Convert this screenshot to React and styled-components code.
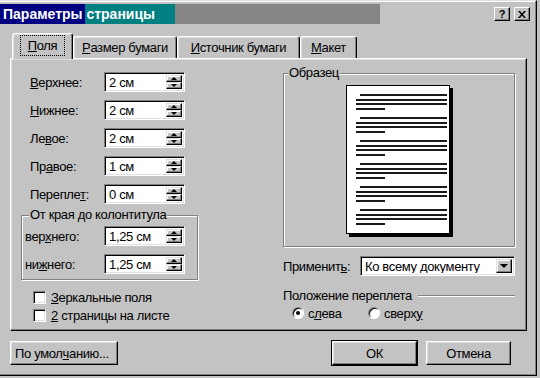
import React from 'react';
import styled, { createGlobalStyle } from 'styled-components';

const GlobalStyle = createGlobalStyle`
  body {
    margin: 0;
    background: #c3c3c3;
    font-family: "Liberation Sans", Arial, sans-serif;
    font-size: 13px;
    letter-spacing: -0.35px;
    color: #000;
  }
`;

const Window = styled.div`
  box-sizing: border-box;
  width: 537px;
  height: 376px;
  background: #c3c3c3;
  border-top: 1px solid #dfdfdf;
  border-right: 1px solid #000;
  border-bottom: 1px solid #000;
  box-shadow: inset -1px -1px 0 #808080, inset 0 1px 0 #fff;
  padding-top: 3px;
  display: flex;
  flex-direction: column;
`;

const TitleBar = styled.div`
  width: 534px;
  box-sizing: border-box;
  height: 20px;
  padding: 0 4px 0 3px;
  display: flex;
  align-items: center;
  background: linear-gradient(to right, #000080 0 85px, #008080 85px 175px, #868686 175px 380px, transparent 380px);
`;

const Title = styled.span`
  flex: 1;
  color: #fff;
  font-weight: bold;
  font-size: 14px;
  letter-spacing: 0;
`;

const CaptionButton = styled.div`
  box-sizing: border-box;
  width: 16px;
  height: 14px;
  margin-left: ${p => p.$gap || 0}px;
  background: #c3c3c3;
  border-top: 1px solid #fff;
  border-left: 1px solid #fff;
  border-right: 1px solid #000;
  border-bottom: 1px solid #000;
  box-shadow: inset -1px -1px 0 #808080;
  display: flex;
  align-items: center;
  justify-content: center;
  font-weight: bold;
  font-size: 11px;
  line-height: 11px;
`;

const Tabs = styled.div`
  display: flex;
  align-items: flex-end;
  height: 25px;
  margin: 9px 0 0 12px;
  position: relative;
  z-index: 1;
`;

const Tab = styled.div`
  box-sizing: border-box;
  width: ${p => p.$w}px;
  height: ${p => (p.$active ? 26 : 22)}px;
  margin-bottom: ${p => (p.$active ? -1 : 0)}px;
  background: #c3c3c3;
  border-top: 1px solid #fff;
  border-left: 1px solid #fff;
  border-right: 1px solid #000;
  border-radius: 3px 3px 0 0;
  box-shadow: inset -1px 0 0 #808080, inset 1px 1px 0 #dfdfdf;
  display: flex;
  align-items: center;
  justify-content: center;
  padding-bottom: ${p => (p.$active ? 2 : 0)}px;
`;

const Focus = styled.span`
  outline: 1px dotted #000;
  padding: 2px 7px;
`;

const Panel = styled.div`
  box-sizing: border-box;
  width: 517px;
  height: 273px;
  margin-left: 10px;
  border-top: 1px solid #fff;
  border-left: 1px solid #fff;
  border-right: 1px solid #000;
  border-bottom: 1px solid #000;
  box-shadow: inset -1px -1px 0 #808080, inset 1px 1px 0 #dfdfdf;
  padding: 7px 0 0 10px;
  display: grid;
  grid-template-columns: 262px 232px;
  align-items: start;
`;

const Column = styled.div`
  display: flex;
  flex-direction: column;
  padding-top: ${p => p.$top || 0}px;
`;

const FieldList = styled.div`
  display: flex;
  flex-direction: column;
  gap: 8px;
  padding-left: ${p => p.$indent || 0}px;
`;

const FieldRow = styled.div`
  display: flex;
  align-items: center;
  height: 20px;
`;

const Label = styled.span`
  width: ${p => p.$w}px;
  flex-shrink: 0;
  white-space: nowrap;
`;

const Sunken = styled.div`
  box-sizing: border-box;
  height: 20px;
  width: ${p => p.$w}px;
  background: #fff;
  border-top: 1px solid #808080;
  border-left: 1px solid #808080;
  border-right: 1px solid #fff;
  border-bottom: 1px solid #fff;
  box-shadow: inset 1px 1px 0 #000, inset -1px -1px 0 #dfdfdf;
  padding: 2px;
  display: flex;
  align-items: stretch;
`;

const Value = styled.span`
  flex: 1;
  min-width: 0;
  overflow: hidden;
  padding-left: 2px;
  line-height: 16px;
  white-space: nowrap;
`;

const SpinButtons = styled.div`
  width: 16px;
  flex: 0 0 16px;
  display: flex;
  flex-direction: column;
`;

const RaisedButton = styled.div`
  box-sizing: border-box;
  flex: 1;
  width: 16px;
  background: #c3c3c3;
  border-top: 1px solid #dfdfdf;
  border-left: 1px solid #dfdfdf;
  border-right: 1px solid #000;
  border-bottom: 1px solid #000;
  box-shadow: inset -1px -1px 0 #808080, inset 1px 1px 0 #fff;
  display: flex;
  align-items: center;
  justify-content: center;
`;

const DropButton = styled(RaisedButton)`
  flex: 0 0 16px;
`;

const Arrow = styled.span`
  width: 0;
  height: 0;
  border-left: ${p => p.$size}px solid transparent;
  border-right: ${p => p.$size}px solid transparent;
  ${p => (p.$down ? 'border-top' : 'border-bottom')}: ${p => p.$h}px solid #000;
`;

const Group = styled.fieldset`
  margin: ${p => p.$mt || 0}px 0 0 0;
  padding: ${p => p.$pt}px ${p => p.$pr || 0}px ${p => p.$pb}px ${p => p.$pl || 0}px;
  width: ${p => p.$w}px;
  box-sizing: border-box;
  min-width: 0;
  border: 1px solid #808080;
  box-shadow: 1px 1px 0 #fff, inset 1px 1px 0 #fff;
`;

const Legend = styled.legend`
  margin-left: 4px;
  padding: 0 1px;
  line-height: 14px;
  background: #c3c3c3;
`;

const CheckList = styled.div`
  display: flex;
  flex-direction: column;
  gap: 5px;
  margin-top: 11px;
  padding-left: 12px;
`;

const CheckRow = styled.label`
  display: flex;
  align-items: center;
  gap: 5px;
  height: 13px;
  line-height: 13px;
`;

const Box = styled.span`
  box-sizing: border-box;
  width: 13px;
  height: 13px;
  background: #fff;
  border-top: 1px solid #808080;
  border-left: 1px solid #808080;
  border-right: 1px solid #fff;
  border-bottom: 1px solid #fff;
  box-shadow: inset 1px 1px 0 #000, inset -1px -1px 0 #dfdfdf;
`;

const PageWrap = styled.div`
  display: flex;
  justify-content: center;
`;

const ApplyRow = styled.div`
  display: flex;
  align-items: center;
  margin-top: 9px;
`;

const SectionRow = styled.div`
  display: flex;
  align-items: center;
  margin-top: 12px;
  line-height: 15px;
`;

const Rule = styled.div`
  flex: 1;
  margin-left: 6px;
  height: 1px;
  background: #808080;
  border-bottom: 1px solid #fff;
`;

const RadioRow = styled.div`
  display: flex;
  align-items: center;
  margin-top: 3px;
  padding-left: 9px;
  height: 14px;
`;

const RadioItem = styled.label`
  display: flex;
  align-items: center;
  gap: 4px;
  width: ${p => p.$w || 'auto'};
`;

const Circle = styled.span`
  box-sizing: border-box;
  width: 12px;
  height: 12px;
  border-radius: 50%;
  background: #fff;
  border: 1px solid;
  border-color: #808080 #fff #fff #808080;
  box-shadow: inset 1px 1px 0 #000;
  display: flex;
  align-items: center;
  justify-content: center;
  &::after {
    content: '';
    width: 4px;
    height: 4px;
    border-radius: 50%;
    background: ${p => (p.$checked ? '#000' : 'transparent')};
  }
`;

const Footer = styled.div`
  display: flex;
  align-items: center;
  margin-top: 10px;
  padding: 0 25px 0 10px;
`;

const Button = styled.div`
  box-sizing: border-box;
  width: ${p => p.$w}px;
  height: 24px;
  margin-left: ${p => p.$ml || '0'};
  background: #c3c3c3;
  border-top: 1px solid #fff;
  border-left: 1px solid #fff;
  border-right: 1px solid #000;
  border-bottom: 1px solid #000;
  box-shadow: inset -1px -1px 0 #808080, inset 1px 1px 0 #dfdfdf;
  outline: ${p => (p.$default ? '1px solid #000' : 'none')};
  display: flex;
  align-items: center;
  justify-content: ${p => (p.$left ? 'flex-start' : 'center')};
  padding-left: ${p => (p.$left ? 4 : 0)}px;
  white-space: nowrap;
`;

function SpinField({ label, value, labelWidth }) {
  return (
    <FieldRow>
      <Label $w={labelWidth}>{label}</Label>
      <Sunken $w={81}>
        <Value>{value}</Value>
        <SpinButtons>
          <RaisedButton><Arrow $size={3} $h={3} /></RaisedButton>
          <RaisedButton><Arrow $size={3} $h={3} $down /></RaisedButton>
        </SpinButtons>
      </Sunken>
    </FieldRow>
  );
}

function PagePreview() {
  const paragraphs = [0, 1, 2, 3, 4, 5];
  return (
    <svg width="107" height="152" viewBox="0 0 107 152">
      <rect x="3" y="3" width="104" height="149" fill="#000" />
      <rect x="0.5" y="0.5" width="103" height="148" fill="#fff" stroke="#000" />
      {paragraphs.map(i => {
        const y = 10 + i * 23;
        return (
          <g key={i} stroke="#1a1a1a" strokeWidth="2">
            <line x1="14" y1={y} x2="101" y2={y} />
            <line x1="10" y1={y + 5} x2="101" y2={y + 5} />
            <line x1="10" y1={y + 9} x2="101" y2={y + 9} />
            <line x1="10" y1={y + 14} x2="39" y2={y + 14} />
          </g>
        );
      })}
    </svg>
  );
}

export default function App() {
  return (
    <>
      <GlobalStyle />
      <Window>
        <TitleBar>
          <Title>Параметры страницы</Title>
          <CaptionButton>?</CaptionButton>
          <CaptionButton $gap={4}>
            <svg width="8" height="7" viewBox="0 0 8 7">
              <path d="M0 0h2l2 2.5L6 0h2L5 3.5 8 7H6L4 4.5 2 7H0l3-3.5z" fill="#000" />
            </svg>
          </CaptionButton>
        </TitleBar>

        <Tabs>
          <Tab $active $w={61}><Focus><u>П</u>оля</Focus></Tab>
          <Tab $w={104}><u>Р</u>азмер бумаги</Tab>
          <Tab $w={123}><u>И</u>сточник бумаги</Tab>
          <Tab $w={57}><u>М</u>акет</Tab>
        </Tabs>

        <Panel>
          <Column $top={6}>
            <FieldList $indent={9}>
              <SpinField labelWidth={74} label={<><u>В</u>ерхнее:</>} value="2 см" />
              <SpinField labelWidth={74} label={<><u>Н</u>ижнее:</>} value="2 см" />
              <SpinField labelWidth={74} label={<>Ле<u>в</u>ое:</>} value="2 см" />
              <SpinField labelWidth={74} label={<>Пр<u>а</u>вое:</>} value="1 см" />
              <SpinField labelWidth={74} label={<>Перепле<u>т</u>:</>} value="0 см" />
            </FieldList>

            <Group $w={177} $mt={4} $pt={4} $pb={5} $pl={3}>
              <Legend>От края до колонтитула</Legend>
              <FieldList>
                <SpinField labelWidth={79} label={<>вер<u>х</u>него:</>} value="1,25 см" />
                <SpinField labelWidth={79} label={<>ни<u>ж</u>него:</>} value="1,25 см" />
              </FieldList>
            </Group>

            <CheckList>
              <CheckRow><Box /><span><u>З</u>еркальные поля</span></CheckRow>
              <CheckRow><Box /><span><u>2</u> страницы на листе</span></CheckRow>
            </CheckList>
          </Column>

          <Column>
            <Group $w={232} $pt={5} $pb={9}>
              <Legend>Образец</Legend>
              <PageWrap>
                <PagePreview />
              </PageWrap>
            </Group>

            <ApplyRow>
              <Label $w={77}>Применит<u>ь</u>:</Label>
              <Sunken $w={155}>
                <Value>Ко всему документу</Value>
                <DropButton><Arrow $size={4} $h={4} $down /></DropButton>
              </Sunken>
            </ApplyRow>

            <SectionRow>
              <span>Положение переплета</span>
              <Rule />
            </SectionRow>

            <RadioRow>
              <RadioItem $w="76px"><Circle $checked /><span>с<u>л</u>ева</span></RadioItem>
              <RadioItem><Circle /><span>сверх<u>у</u></span></RadioItem>
            </RadioRow>
          </Column>
        </Panel>

        <Footer>
          <Button $w={108} $left>По умол<u>ч</u>анию...</Button>
          <Button $w={85} $ml="auto" $default>ОК</Button>
          <Button $w={85} $ml="9px">Отмена</Button>
        </Footer>
      </Window>
    </>
  );
}
